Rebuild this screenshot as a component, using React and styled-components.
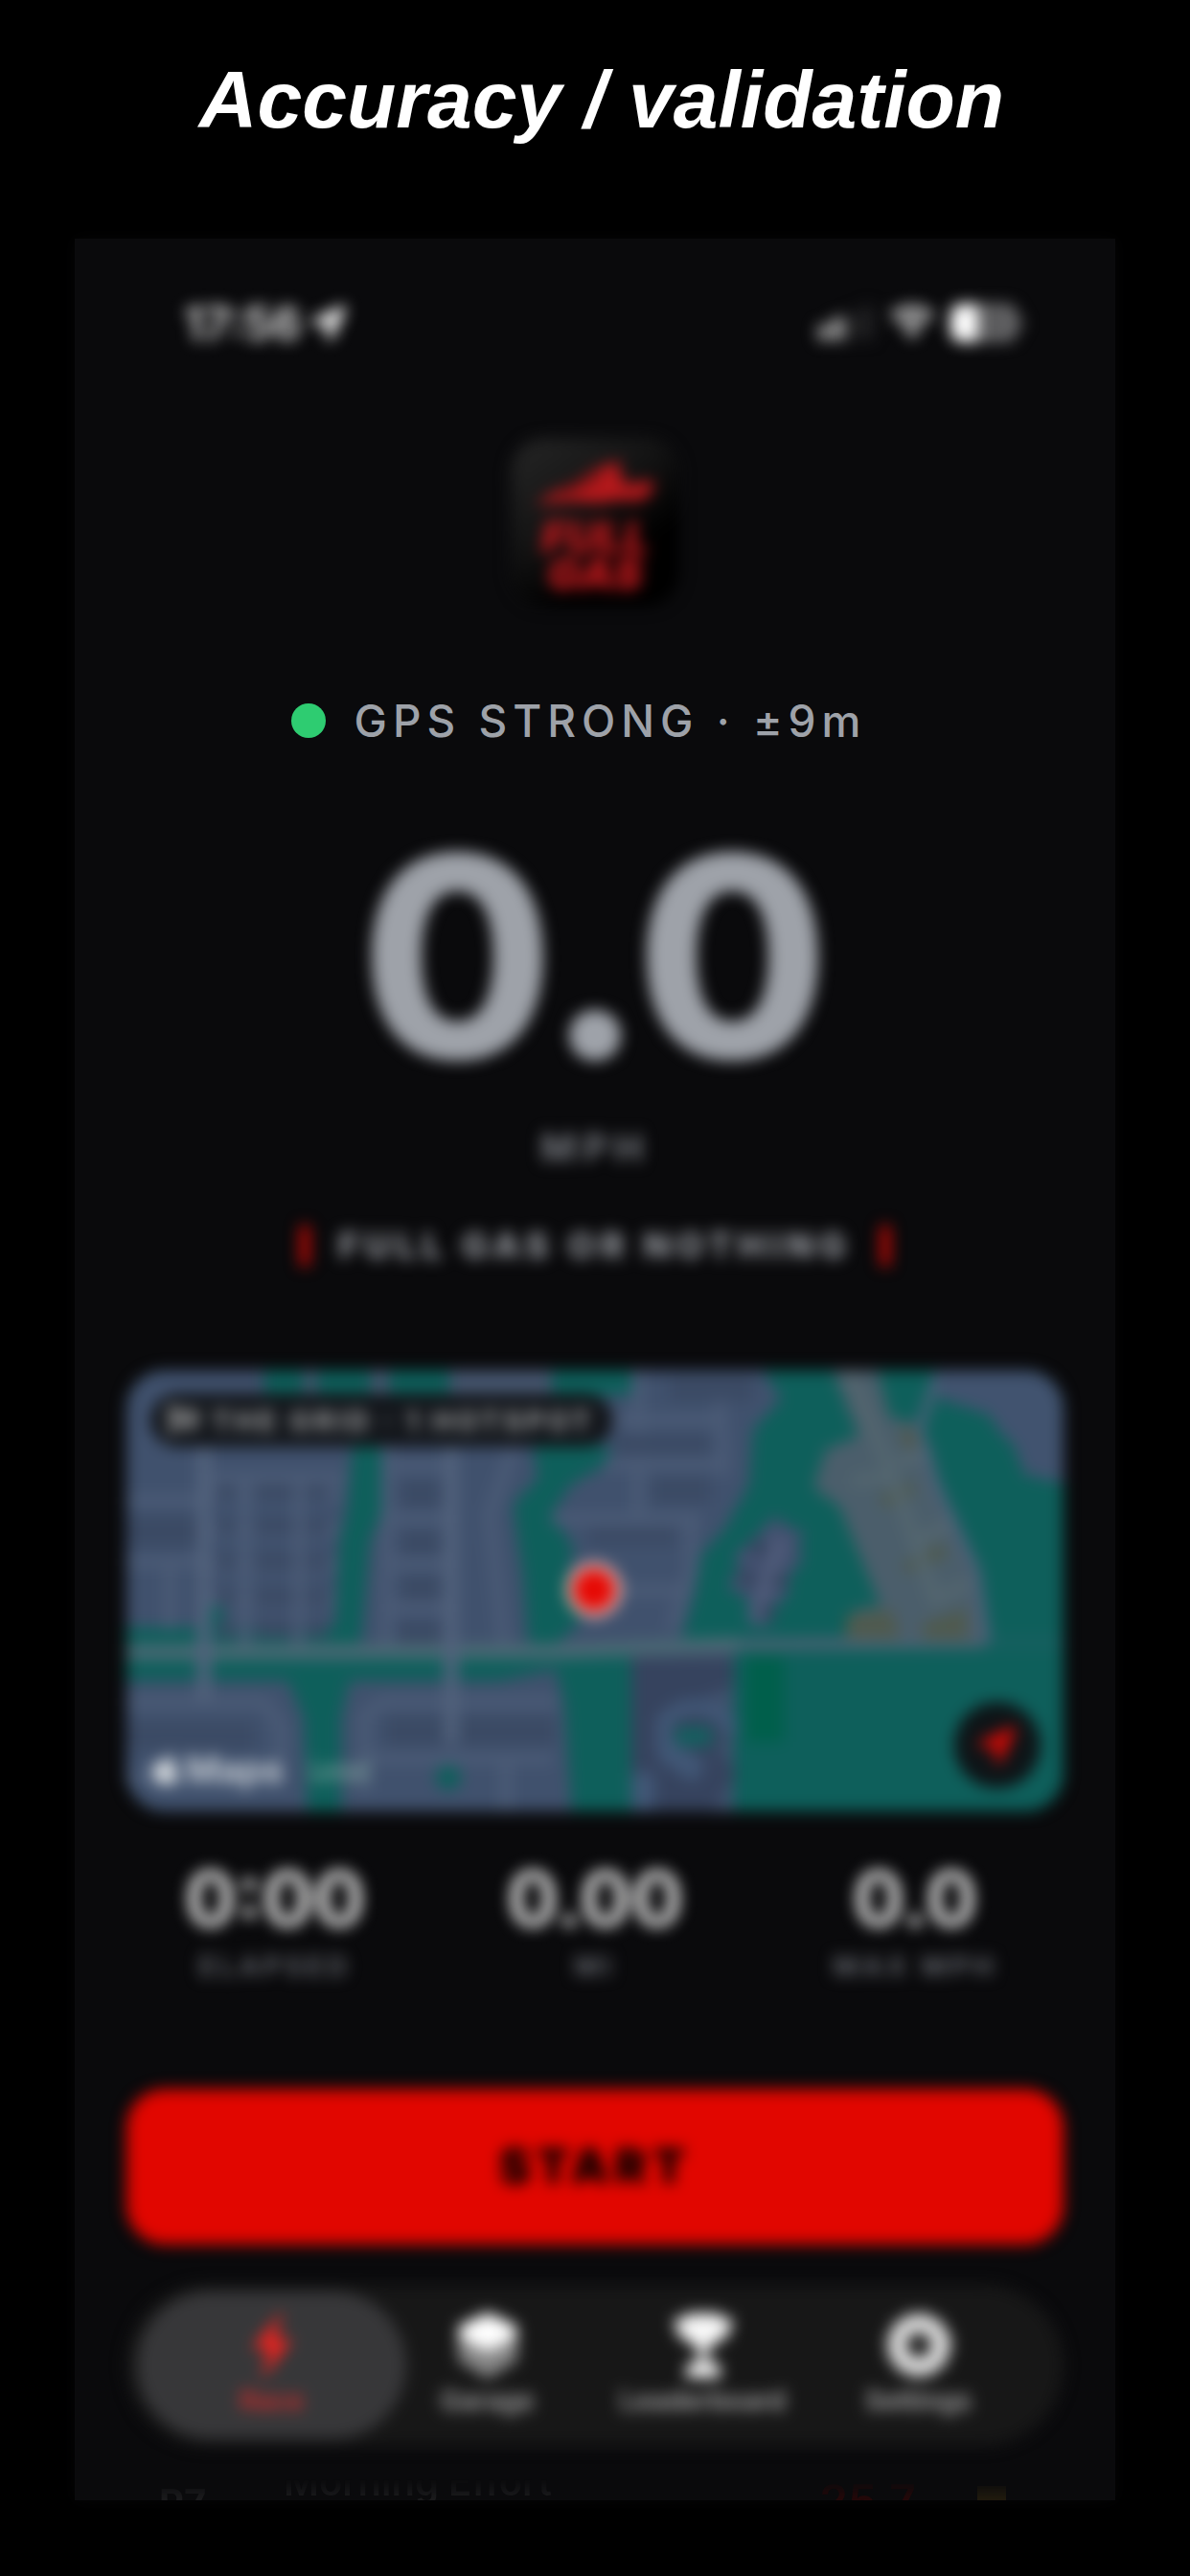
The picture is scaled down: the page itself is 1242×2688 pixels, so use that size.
import React from 'react';
import styled, { createGlobalStyle, css } from 'styled-components';
import { FaLocationArrow, FaApple, FaFlagCheckered } from 'react-icons/fa';

const colors = {
    page: '#000000',
    screen: '#0a0a0c',
    red: '#e10600',
    green: '#2ecc71',
    silver: '#9ea2a9',
    muted: '#74777d',
    white: '#ffffff',
}

const GlobalStyle = createGlobalStyle`
    * { box-sizing: border-box; }
    body {
        margin: 0;
        background: ${colors.page};
        font-family: Inter, "Liberation Sans", sans-serif;
    }
    button { font-family: inherit; border: 0; padding: 0; }
`

const soft = css`
    filter: blur(8px);
`

const Page = styled.main`
    display: flex;
    flex-direction: column;
    padding: 0 78px 78px;
`

const Title = styled.h1`
    margin: 0;
    padding: 56px 0 97px 14px;
    color: ${colors.white};
    font: italic bold 84px/96px "Liberation Sans", Arial, sans-serif;
    text-align: center;
`

const Screen = styled.section`
    display: flex;
    flex-direction: column;
    padding: 64px 54px 0;
    background: ${colors.screen};
    box-shadow: 0 0 16px #060607;
`

const StatusBar = styled.div`
    display: flex;
    justify-content: space-between;
    align-items: center;
    height: 48px;
    padding: 0 42px 0 60px;
    color: #e6e6e6;
    ${soft}
`

const StatusGroup = styled.div`
    display: flex;
    align-items: center;
    gap: ${p => p.$gap}px;
    font-size: 48px;
    font-weight: 600;
`

const Logo = styled.div`
    display: flex;
    flex-direction: column;
    align-items: center;
    align-self: center;
    width: 176px;
    height: 176px;
    margin-top: 96px;
    padding-top: 22px;
    border-radius: 36px;
    background: linear-gradient(145deg, #262626 0%, #141414 40%, #000000 70%);
    ${soft}
`

const LogoText = styled.span`
    width: 120px;
    margin-top: 10px;
    color: #c0181c;
    font-size: 46px;
    font-style: italic;
    font-weight: 900;
    line-height: 38px;
    text-align: center;
`

const GpsRow = styled.div`
    display: flex;
    justify-content: center;
    align-items: center;
    gap: 30px;
    margin-top: 91px;
    padding-right: 34px;
    color: ${colors.silver};
    font-size: 46px;
    font-weight: 500;
    line-height: 56px;
    letter-spacing: 6px;
`

const GpsDot = styled.span`
    width: 36px;
    height: 36px;
    border-radius: 50%;
    background: ${colors.green};
`

const Speed = styled.div`
    margin-top: 98px;
    color: ${colors.silver};
    font-size: 292px;
    font-weight: 800;
    line-height: 240px;
    text-align: center;
    ${soft}
`

const SpeedUnit = styled.div`
    margin-top: 60px;
    color: ${colors.muted};
    font-size: 40px;
    font-weight: 700;
    line-height: 40px;
    letter-spacing: 7px;
    text-align: center;
    ${soft}
`

const Tagline = styled.p`
    display: flex;
    justify-content: center;
    align-items: center;
    gap: 30px;
    margin: 58px 0 0;
    color: #96999f;
    font-size: 37px;
    font-weight: 800;
    line-height: 48px;
    letter-spacing: 6px;
    ${soft}
`

const TaglineBar = styled.span`
    width: 10px;
    height: 42px;
    background: #c80805;
`

const MapCard = styled.div`
    position: relative;
    height: 460px;
    border-radius: 40px;
    overflow: hidden;
    background: #0e5e5a;
`

const MapFrame = styled.div`
    margin-top: 106px;
    ${soft}
`

const MapDrawing = styled.svg`
    display: block;
    width: 100%;
    height: 100%;
`

const MapChip = styled.div`
    position: absolute;
    top: 24px;
    left: 25px;
    display: flex;
    align-items: center;
    gap: 14px;
    height: 56px;
    padding: 0 20px 0 18px;
    border-radius: 28px;
    background: #13161b;
    color: #a4a4a4;
    font-size: 29px;
    font-weight: 700;
    letter-spacing: 4px;
    white-space: nowrap;
`

const MapCredit = styled.div`
    position: absolute;
    left: 22px;
    bottom: 22px;
    display: flex;
    align-items: center;
    gap: 2px;
    color: #d0d5da;
    font-size: 38px;
    font-weight: 600;
    line-height: 44px;
`

const LegalLink = styled.a`
    margin-left: 26px;
    color: #7fa39f;
    font-size: 24px;
    font-weight: 500;
`

const LocateButton = styled.button`
    position: absolute;
    right: 24px;
    bottom: 24px;
    display: flex;
    justify-content: center;
    align-items: center;
    width: 90px;
    height: 90px;
    border-radius: 50%;
    background: #0e1417;
    color: #d00a06;
`

const Stats = styled.div`
    display: grid;
    grid-template-columns: repeat(3, 1fr);
    gap: 24px;
    margin-top: 51px;
    text-align: center;
    ${soft}
`

const StatValue = styled.div`
    color: #d6d6d6;
    font-size: 80px;
    font-weight: 700;
    line-height: 80px;
`

const StatLabel = styled.div`
    margin-top: 13px;
    color: #6b6e75;
    font-size: 29px;
    font-weight: 600;
    line-height: 36px;
    letter-spacing: 4px;
`

const StartButton = styled.button`
    height: 162px;
    margin-top: 110px;
    padding-bottom: 2px;
    border-radius: 40px;
    background: ${colors.red};
    color: #000000;
    font-size: 50px;
    font-weight: 900;
    letter-spacing: 6px;
    ${soft}
`

const TabBar = styled.nav`
    display: grid;
    grid-template-columns: repeat(4, 1fr);
    height: 168px;
    margin-top: 42px;
    padding: 7px 39px;
    border-radius: 84px;
    background: #171717;
    ${soft}
`

const Tab = styled.button`
    display: flex;
    flex-direction: column;
    align-items: center;
    gap: 4px;
    padding-top: 20px;
    margin: ${p => p.$active ? '0 -28px' : 0};
    border-radius: 77px;
    background: ${p => p.$active ? '#373739' : 'transparent'};
    color: ${p => p.$active ? '#ee231f' : '#f8f8f8'};
    svg { height: 72px; width: 72px; flex: none; }
`

const TabLabel = styled.span`
    color: ${p => p.$active ? '#cc2c2c' : '#a8a8a8'};
    font-size: 28px;
    font-weight: 600;
    line-height: 36px;
`

// row under the tab bar, only its top shows
const PeekRow = styled.div`
    display: flex;
    align-items: flex-start;
    height: 57px;
    padding: 14px 60px 0 34px;
    overflow: hidden;
    color: #1c1c1e;
    font-size: 40px;
    font-weight: 600;
    line-height: 48px;
    mask-image: linear-gradient(transparent 62%, #000 100%);
`

const PeekRank = styled.span`
    width: 130px;
    padding-top: 22px;
    font-weight: 700;
`

const PeekScore = styled.span`
    margin-left: auto;
    padding-top: 20px;
    color: #260809;
    font-size: 48px;
`

const PeekMedal = styled.span`
    width: 30px;
    height: 30px;
    margin: 28px 0 0 64px;
    background: #211b0e;
`

const SignalIcon = () => (
    <svg width="58" height="36" viewBox="0 0 58 36" aria-hidden="true">
        <rect x="0" y="20" width="12" height="16" rx="3" fill="#a8a8a8" />
        <rect x="15" y="12" width="12" height="24" rx="3" fill="#a8a8a8" />
        <rect x="31" y="6" width="11" height="30" rx="3" fill="#242426" />
        <rect x="46" y="0" width="11" height="36" rx="3" fill="#242426" />
    </svg>
)

const WifiIcon = () => (
    <svg width="48" height="36" viewBox="0 0 48 36" fill="currentColor" aria-hidden="true">
        <path d="M24 0C15 0 7 4 1 9l4 5c5-5 12-8 19-8s14 3 19 8l4-5C41 4 33 0 24 0z" />
        <path d="M24 11c-6 0-11 2-15 6l5 5c3-3 6-5 10-5s7 2 10 5l5-5c-4-4-9-6-15-6z" />
        <path d="M24 22c-3 0-5 1-7 3l7 10 7-10c-2-2-4-3-7-3z" />
    </svg>
)

const BatteryIcon = () => (
    <svg width="76" height="40" viewBox="0 0 76 40" aria-hidden="true">
        <rect x="0" y="0" width="70" height="40" rx="12" fill="#68686a" />
        <path d="M12 0h16v40H12C5 40 0 35 0 28V12C0 5 5 0 12 0z" fill="#ffffff" />
        <path d="M34 10h4v20h-4zM44 10h10v20H44z" fill="#4c4c4e" />
        <path d="M72 13c3 1 4 4 4 7s-1 6-4 7z" fill="#68686a" />
    </svg>
)

const CarMark = () => (
    <svg width="128" height="52" viewBox="0 0 128 52" aria-hidden="true">
        <path d="M2 48C14 36 34 30 48 22C60 12 74 6 90 2L90 16L98 28C104 24 116 22 126 24C124 38 116 44 104 44C92 40 80 46 64 46C44 44 24 44 2 48Z" fill="#b5181b" />
        <path d="M30 36L70 16" stroke="#3a0c0d" strokeWidth="4" />
    </svg>
)

const BoltIcon = () => (
    <svg viewBox="0 0 72 72" fill="currentColor" aria-hidden="true">
        <path d="M47 0L15 40H33L25 72L57 30H39z" />
    </svg>
)

const GarageIcon = () => (
    <svg viewBox="0 0 72 72" aria-hidden="true">
        <path d="M5 26v26l31 19 31-19V26z" fill="#868686" />
        <path d="M36 2L66 16v12L36 43 6 28V16z" fill="#ffffff" />
    </svg>
)

const TrophyIcon = () => (
    <svg viewBox="0 0 72 72" fill="currentColor" aria-hidden="true">
        <path d="M18 3H54V8H66C66 22 60 30 48 34C45 38 42 40 40 42V54H50Q54 58 54 70H18Q18 58 22 54H32V42C30 40 27 38 24 34C12 30 6 22 6 8H18z" />
    </svg>
)

const GearIcon = () => (
    <svg viewBox="0 0 72 72" aria-hidden="true">
        <circle cx="36" cy="36" r="22" fill="none" stroke="#e0e0e0" strokeWidth="18" />
        <circle cx="36" cy="36" r="32" fill="none" stroke="#e0e0e0" strokeWidth="5" strokeDasharray="8 9" />
    </svg>
)

const blockRows = [112, 148, 185, 222, 256]
const blockColumns = [[96, 20], [134, 42], [188, 22]]

const StreetMap = () => (
    <MapDrawing viewBox="0 0 980 460" preserveAspectRatio="xMidYMid slice" aria-hidden="true">
        <rect width="980" height="460" fill="#40516d" />

        {/* parks and open land */}
        <g fill="#0e5f5b">
            <path d="M145 0H528V26H145z" />
            <path d="M238 70H271L268 146L255 179L245 290H218L223 179L231 146z" />
            <path d="M425 79H505V96L465 119L445 149L468 186L460 220L475 262L445 290H421L415 212L408 166L405 139L431 112z" />
            <path d="M0 268H84V236H98L106 268H235V324H0z" />
            <path d="M235 298H450V312L390 324H235z" />
            <path d="M168 320H235L225 362V460H190L186 362z" />
            <path d="M445 298H528V460H466L458 346z" />
            <path d="M665 0H980V460H635V290H578L595 229L601 192L625 166L651 119L655 62L685 29z" />
            <circle cx="337" cy="425" r="13" />
        </g>
        <path d="M186 0H200V24H186zM256 0H275V24H256zM338 0H445V24H338z" fill="#46566f" />
        <path d="M648 299H687V388H648z" fill="#005f4b" />

        {/* side streets */}
        <g fill="none" stroke="#4b5b76" strokeWidth="12">
            <path d="M0 136H82M0 200H82M46 200V270M88 112H230M88 130H225M88 167H222M88 204H220M88 240H218" />
            <path d="M125 112V290M180 112V290M273 80V290M273 100H338M273 155H338M273 202H338M273 248H338" />
            <path d="M405 79L380 150L395 290M445 155H600M470 230H590M500 98H630M535 0V90M535 100V150M620 30L625 110M590 160V210L570 270M500 52H625" />
            <path d="M0 346H145L162 372V425H0M338 346H450M250 440V360L268 346H338M250 405H445M397 405V460" />
        </g>
        <g fill="#3b4a64">
            {blockRows.map(y => blockColumns.map(([x, w]) => <rect key={`${x}-${y}`} x={x} y={y + 6} width={w} height="17" />))}
            <path d="M288 116H328V142H288zM288 168H328V192H288zM288 215H328V240H288zM285 262H328V288H285z" />
            <path d="M0 368H135V396H0zM272 362H448V392H272zM0 152H78V184H0zM510 66H610V88H510zM568 6H655V32H568zM550 112H610V138H550zM484 164H575V182H484z" />
        </g>

        {/* main roads */}
        <g fill="none" stroke="#52627c" strokeWidth="14">
            <path d="M0 294L450 293L640 286" stroke="#4a6874" strokeWidth="16" />
            <path d="M640 286L896 284" stroke="#4a6274" strokeWidth="12" />
            <path d="M896 284H980" stroke="#165f5f" />
            <path d="M82 80V345M340 79V390" />
        </g>

        {/* hillside estate */}
        <path d="M738 0H785L798 49L828 56L841 106L888 209L898 286L751 279L761 249L788 246L745 142L718 122L731 82L765 69z" fill="#4b5e6b" />
        <path d="M808 62L826 60L830 80H812zM788 130L822 115V132L792 144zM812 200L853 180L858 194L815 212zM752 256L800 250L808 280H752zM832 264L878 248V280H832z" fill="#4f5a4e" />
        <path d="M755 0L800 110L758 116M800 110L845 240L880 222M805 96L842 86M825 180L866 156" fill="none" stroke="#54666f" strokeWidth="12" />
        <path d="M848 4L828 62L848 124L888 209L899 284" fill="none" stroke="#4c5f78" strokeWidth="9" />
        <path d="M848 0H980V118L938 109L928 80L911 62L901 46L848 29z" fill="#41536f" />

        {/* terrace */}
        <path d="M678 152L690 162L708 169L702 186L708 196L694 212L690 238L675 246V266H651L650 238L628 226L640 206L636 192L655 176z" fill="#43506f" />
        <path d="M684 176L656 262" stroke="#505c7a" strokeWidth="14" />
        <path d="M654 180L668 190M640 212L658 222M690 216L676 222M664 248L676 256" stroke="#36455f" strokeWidth="14" />

        {/* cul-de-sac */}
        <path d="M528 299H635V330L604 340L635 366L618 396L638 420L612 460H528z" fill="#36435e" />
        <path d="M562 400V366Q578 348 604 352Q628 360 632 378" fill="none" stroke="#415776" strokeWidth="16" />
        <path d="M562 396L600 420M540 420V460" stroke="#415776" strokeWidth="24" />
        <path d="M574 372H612V392H574z" fill="#13605f" />

        <circle cx="489" cy="229" r="29" fill="#e4b9b4" />
        <circle cx="489" cy="229" r="22" fill="#e60a05" />
    </MapDrawing>
)

const stats = [
    { value: '0:00', label: 'ELAPSED' },
    { value: '0.00', label: 'MI' },
    { value: '0.0', label: 'MAX MPH' },
]

const tabs = [
    { label: 'Race', icon: <BoltIcon /> },
    { label: 'Garage', icon: <GarageIcon /> },
    { label: 'Leaderboard', icon: <TrophyIcon /> },
    { label: 'Settings', icon: <GearIcon /> },
]

const App = () => (
    <>
        <GlobalStyle />
        <Page>
            <Title>Accuracy / validation</Title>
            <Screen>
                <StatusBar>
                    <StatusGroup $gap={10}>
                        <span>17:56</span>
                        <FaLocationArrow size={36} />
                    </StatusGroup>
                    <StatusGroup $gap={16}>
                        <SignalIcon />
                        <WifiIcon />
                        <BatteryIcon />
                    </StatusGroup>
                </StatusBar>

                <Logo>
                    <CarMark />
                    <LogoText>FULL GAS</LogoText>
                </Logo>

                <GpsRow>
                    <GpsDot />
                    <span>GPS STRONG · ±9m</span>
                </GpsRow>
                <Speed>0.0</Speed>
                <SpeedUnit>MPH</SpeedUnit>
                <Tagline>
                    <TaglineBar />
                    <span>FULL GAS OR NOTHING</span>
                    <TaglineBar />
                </Tagline>

                <MapFrame>
                    <MapCard>
                        <StreetMap />
                        <MapChip>
                            <FaFlagCheckered size={32} />
                            <span>THE GRID · 1 HOTSPOT</span>
                        </MapChip>
                        <MapCredit>
                            <FaApple size={38} />
                            <span>Maps</span>
                            <LegalLink href="#legal">Legal</LegalLink>
                        </MapCredit>
                        <LocateButton aria-label="Centre on my location">
                            <FaLocationArrow size={38} />
                        </LocateButton>
                    </MapCard>
                </MapFrame>

                <Stats>
                    {stats.map(x => (
                        <div key={x.label}>
                            <StatValue>{x.value}</StatValue>
                            <StatLabel>{x.label}</StatLabel>
                        </div>
                    ))}
                </Stats>

                <StartButton>START</StartButton>

                <TabBar>
                    {tabs.map((x, i) => (
                        <Tab key={x.label} $active={i === 0}>
                            {x.icon}
                            <TabLabel $active={i === 0}>{x.label}</TabLabel>
                        </Tab>
                    ))}
                </TabBar>

                <PeekRow>
                    <PeekRank>P7</PeekRank>
                    <span>Morning Effort</span>
                    <PeekScore>25.7</PeekScore>
                    <PeekMedal />
                </PeekRow>
            </Screen>
        </Page>
    </>
)

export default App;
